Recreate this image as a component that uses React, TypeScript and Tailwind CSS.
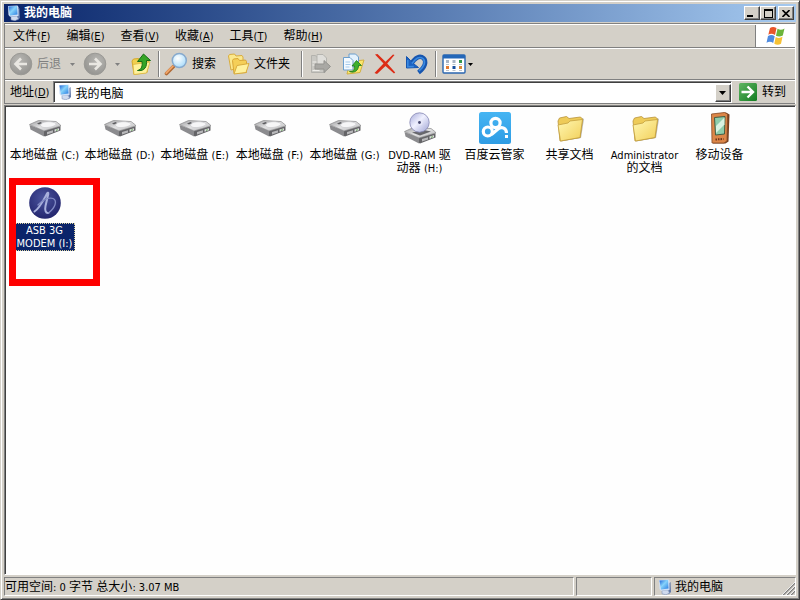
import React from "react";

const LATIN = /([\x21-\x7e][\x20-\x7e]*)/;

/* Chinese glyphs are set at 12px, Latin runs at 11px. */
function Mixed({ text }: { text: string }) {
  return (
    <>
      {text.split(LATIN).map((part, i) =>
        i % 2 ? (
          <span key={i} className="text-[11px]">
            {part}
          </span>
        ) : (
          part
        ),
      )}
    </>
  );
}

function ComputerIcon({ className }: { className: string }) {
  return (
    <svg viewBox="0 0 16 16" className={className} aria-hidden="true">
      <defs>
        <linearGradient id="screen" x1="0" y1="0" x2="1" y2="1">
          <stop offset="0" stopColor="#1f62d6" />
          <stop offset="0.45" stopColor="#86d3fb" />
          <stop offset="1" stopColor="#2a7be0" />
        </linearGradient>
      </defs>
      <path d="M11 5l2.500-2 .5 10-2.500 2.500z" fill="#5d76a8" />
      <path d="M5 11.500l6-.5 1.500 3-3.500 1.800-4-1z" fill="#cfdaee" stroke="#7f93ba" strokeWidth=".6" />
      <path d="M2 1l9.500-.5L12.500 2v9l-8.500.800L2.500 10z" fill="#cfe0f7" />
      <path d="M2.500 1.500L11 1l.500 8.500L4 10.500z" fill="url(#screen)" />
    </svg>
  );
}

function ArrowDisc({ flip }: { flip?: boolean }) {
  return (
    <svg viewBox="0 0 24 24" className={flip ? "size-6 -scale-x-100" : "size-6"} aria-hidden="true">
      <defs>
        <radialGradient id="disc" cx=".4" cy=".35" r=".8">
          <stop offset="0" stopColor="#b9b8b4" />
          <stop offset="1" stopColor="#8e8d8a" />
        </radialGradient>
      </defs>
      <circle cx="12" cy="12" r="10.800" fill="url(#disc)" stroke="#9a9995" />
      <path d="M12 6.500L6.500 12l5.500 5.500M6.500 12H18" fill="none" stroke="#e9e7e2" strokeWidth="2.600" />
    </svg>
  );
}

function UpIcon() {
  return (
    <svg viewBox="0 0 22 24" className="h-6 w-[22px]" aria-hidden="true">
      <path d="M2 9l1.500-2 5-.5 2 1.500 7-1.500 1.500 2-2 12-13 2z" fill="#f0cf4e" stroke="#d5a92b" />
      <path d="M3 12.500l13-2 4-.5-3.500 11L4 22.500z" fill="#fff29c" stroke="#dcb743" strokeWidth=".8" />
      <path d="M7.500 18.500c4.500-1 5-5 4.500-9H7.500L13.500 2l7 6.500h-4c.5 6-1.500 11-9 10z" fill="#35a526" stroke="#176d16" />
    </svg>
  );
}

function SearchIcon() {
  return (
    <svg viewBox="0 0 24 24" className="size-6" aria-hidden="true">
      <defs>
        <radialGradient id="lens" cx=".4" cy=".35" r=".7">
          <stop offset="0" stopColor="#ffffff" />
          <stop offset="1" stopColor="#a5dafa" />
        </radialGradient>
      </defs>
      <path d="M9.500 14.500L2.500 21.500" stroke="#b06a35" strokeWidth="3.600" strokeLinecap="round" />
      <path d="M9 14.200L2.200 21" stroke="#f0a468" strokeWidth="1.800" strokeLinecap="round" />
      <circle cx="15.300" cy="8.500" r="7" fill="url(#lens)" stroke="#86a9cd" strokeWidth="1.500" />
    </svg>
  );
}

function FoldersIcon() {
  return (
    <svg viewBox="0 0 24 24" className="size-6" aria-hidden="true">
      <path d="M1.500 4l1-1.500 5-.5 1.500 2 6-.5 1 1.500v10L4 18z" fill="#fbe88d" stroke="#d9ac3e" />
      <path d="M5.500 8.500l1-1.500 4.500-.5 1.500 2 6-.5 1 1.500v11L7 21.500z" fill="#f5cf57" stroke="#d9a636" />
      <path d="M10 13.500l12-2-3 9L7 22z" fill="#fff19c" stroke="#d9ac3e" />
    </svg>
  );
}

function MoveIcon() {
  return (
    <svg viewBox="0 0 24 24" className="size-6" aria-hidden="true">
      <path d="M2.500 20.500v-17h4l1.500 2h8v15z" fill="#c9c8c3" stroke="#b3b2ad" />
      <path d="M8 2.500h6l3.500 3.500v11H8z" fill="#dfdeda" stroke="#b5b4af" />
      <path d="M6 12h9V8.500l6.500 6-6.500 6v-3.500H6z" fill="#a9a8a4" stroke="#94938f" />
      <path d="M3.500 10h4M3.500 13h2M3.500 18.500h7" stroke="#efeeea" />
    </svg>
  );
}

function CopyIcon() {
  return (
    <svg viewBox="0 0 24 24" className="size-6" aria-hidden="true">
      <path d="M9 9.500l14-1.500-4 12.500-13 1.500z" fill="#fbe76c" stroke="#d3b040" />
      <path d="M8 2h6.500L17.500 5v10H8z" fill="#e3f1fd" stroke="#6c9fce" />
      <path d="M2.500 5.500H9l3 3V18H2.500z" fill="#f4faff" stroke="#6c9fce" />
      <path d="M4.500 10H9M4.500 12.500h5M4.500 15h4" stroke="#a6cbec" />
      <path d="M8.500 19.500c4 .5 5.500-2 5-5.500H11l4.500-5.500 5 5H17.500c0 5-4 8-9 6z" fill="#3fb02d" stroke="#1e7a1c" strokeWidth=".8" />
    </svg>
  );
}

function DeleteIcon() {
  return (
    <svg viewBox="0 0 24 24" className="size-6" aria-hidden="true">
      <path d="M2 2.500l2.500-.5 8 7.800L20 2.500l1.500.5-7.300 8.500 8 9-1.200 1-8.500-7.500-8.500 8-2.500-1 9-9.500z" fill="#dc2c16" />
    </svg>
  );
}

function UndoIcon() {
  return (
    <svg viewBox="0 0 24 24" className="size-6" aria-hidden="true">
      <path d="M6.500 11.500C10 5.500 15 3 18.500 6.200c3.500 3.300 1.500 9.300-5 14.300" fill="none" stroke="#1755ae" strokeWidth="4.400" />
      <path d="M1.500 4.500V16l12-.5-4.500-3.500-3.500-3.500z" fill="#1c62c2" stroke="#1755ae" />
      <path d="M7 11.500C10.500 5.800 14.800 4 18 6.700c3 2.800 1.500 7.800-4 12.300M2.800 8v6.700l6-.2" fill="none" stroke="#3a8ae0" strokeWidth="1.600" />
    </svg>
  );
}

function ViewsIcon() {
  return (
    <svg viewBox="0 0 24 20" className="h-5 w-6" aria-hidden="true">
      <rect x="1" y="1" width="22" height="18" rx="1" fill="#fff" stroke="#2a66b0" strokeWidth="1.400" />
      <path d="M1 1h22v3.500H1z" fill="#2467b8" />
      <path d="M4 6h3v3H4zM10.500 6h3v3h-3z" fill="#a9b5c6" />
      <path d="M17 6h3v3h-3z" fill="#33964d" />
      <path d="M4 12h3v3H4z" fill="#e47a31" />
      <path d="M10.500 12h3v3h-3z" fill="#174e9d" />
      <path d="M17 12h3v3h-3z" fill="#d98a3b" />
      <path d="M4 10.500h3M10.500 10.500h3M17 10.500h3M4 16.500h3M10.500 16.500h3M17 16.500h3" stroke="#b9c2cc" />
    </svg>
  );
}

function Caret({ className = "w-[7px] h-1" }: { className?: string }) {
  return (
    <svg viewBox="0 0 7 4" preserveAspectRatio="none" className={className} aria-hidden="true">
      <path d="M0 0h7L3.500 4z" fill="currentColor" />
    </svg>
  );
}

function FlagIcon() {
  return (
    <svg viewBox="0 0 20 20" className="size-5" aria-hidden="true">
      <path d="M4 2c2-1.500 4-1.500 6.500 0L9 9C6.500 7.500 4.500 7.500 2.300 8.700z" fill="#e9562b" />
      <path d="M11.500 2.800c2.500 1.300 4.500 1.300 7-.3l-1.700 7c-2.500 1.300-4.500 1.300-6.800.200z" fill="#6cb43a" />
      <path d="M2 10c2.500-1.300 4.500-1.300 6.700.2L7.200 17C5 15.500 3 15.500.500 16.700z" fill="#4f8be0" />
      <path d="M9.700 11c2.300 1.200 4.500 1.200 6.800-.200L15 17.700c-2.500 1.500-4.500 1.200-6.700 0z" fill="#f6c136" />
    </svg>
  );
}

function GoIcon() {
  return (
    <svg viewBox="0 0 20 20" className="size-5" aria-hidden="true">
      <defs>
        <linearGradient id="go" x1="0" y1="0" x2="1" y2="1">
          <stop offset="0" stopColor="#61b563" />
          <stop offset="1" stopColor="#137d22" />
        </linearGradient>
      </defs>
      <rect x="1" y="1" width="18" height="18" rx="1.500" fill="url(#go)" />
      <path d="M3.500 10h11M9.500 4.500L15 10l-5.500 5.500" fill="none" stroke="#fff" strokeWidth="2.400" />
    </svg>
  );
}

function DriveBody() {
  return (
    <>
      <defs>
        <linearGradient id="drive-top" x1="0" y1="0" x2="1" y2="1">
          <stop offset="0" stopColor="#a2a2a4" />
          <stop offset="0.5" stopColor="#e2e2e3" />
          <stop offset="1" stopColor="#b4b4b6" />
        </linearGradient>
      </defs>
      <path d="M.500 13L15 18.500v6L1.500 17.500z" fill="#8b8b8e" />
      <path d="M15 18.500L31.500 14v4.500L16 24.500l-1-.5z" fill="#646467" />
      <path d="M.500 12.500L9.500 8.500l17.500 1 4.500 3.500v1L15 19z" fill="url(#drive-top)" stroke="#89898b" strokeWidth=".7" />
      <path d="M18 20l6-1.800v2.300l-6 2z" fill="#b9b9bb" />
      <path d="M25.500 17.500l4.500-1.300v2l-4.500 1.600z" fill="#dededf" />
      <path d="M27 17.800l1.800-.5v1l-1.800.5z" fill="#5aa04b" />
    </>
  );
}

function DriveIcon() {
  return (
    <svg viewBox="0 0 32 32" className="size-8" aria-hidden="true">
      <DriveBody />
      <path d="M12 12c3-3 11-3 15-.5 1 2-6 4.500-12 4-3-.5-4-2-3-3.500z" fill="#f6f6f7" stroke="#c5c5c7" strokeWidth=".6" />
      <path d="M8 11.500l3.500-1.500 1.500 1-3 1.500z" fill="#5d5d60" />
    </svg>
  );
}

function DvdIcon() {
  return (
    <svg viewBox="0 0 32 32" className="size-8" aria-hidden="true">
      <defs>
        <linearGradient id="dvd" x1="0" y1="0" x2="1" y2="1">
          <stop offset="0" stopColor="#a4a8d8" />
          <stop offset="0.45" stopColor="#f0f1ff" />
          <stop offset="1" stopColor="#9da2d2" />
        </linearGradient>
      </defs>
      <g transform="translate(0 7)">
        <DriveBody />
      </g>
      <path d="M8 20.500l12-2.500 7 1.500-11 4z" fill="#67676c" />
      <circle cx="15.500" cy="10.500" r="9.700" fill="url(#dvd)" stroke="#8587b4" strokeWidth=".8" />
      <circle cx="15.500" cy="10.500" r="3" fill="#e6e7f8" />
      <circle cx="15.500" cy="10.500" r="1.400" fill="#45476e" />
    </svg>
  );
}

function CloudIcon() {
  return (
    <svg viewBox="0 0 32 32" className="size-8" aria-hidden="true">
      <defs>
        <linearGradient id="cloud" x1="0" y1="0" x2="0" y2="1">
          <stop offset="0" stopColor="#46b5f3" />
          <stop offset="1" stopColor="#2e9ce4" />
        </linearGradient>
      </defs>
      <rect width="32" height="32" rx="2.500" fill="url(#cloud)" />
      <g fill="none" stroke="#fff" strokeWidth="3.200">
        <circle cx="16.500" cy="11" r="4.600" />
        <circle cx="8.800" cy="19.500" r="4.500" />
        <path d="M12.500 22.500L19 17c4-3 8.500-.5 8.500 4" />
      </g>
      <rect x="26" y="23" width="3" height="3" fill="#fff" />
    </svg>
  );
}

function FolderIcon() {
  return (
    <svg viewBox="0 0 32 32" className="size-8" aria-hidden="true">
      <defs>
        <linearGradient id="folder" x1="0" y1="0" x2="1" y2="1">
          <stop offset="0" stopColor="#fff8b4" />
          <stop offset="1" stopColor="#f2cf58" />
        </linearGradient>
      </defs>
      <path d="M7 29.500L27 26l3-19-2-1z" fill="#8f8c86" opacity=".6" />
      <path d="M4 9l1.500-3 7-1.500L15 6.500 26.500 5l2 2L26 25.500 6 29z" fill="#eecb58" stroke="#b9933a" strokeWidth=".8" />
      <path d="M4 13l10-2 2-2L28.500 7.500 26 25.500 6.500 29z" fill="url(#folder)" stroke="#c49f3e" strokeWidth=".8" />
    </svg>
  );
}

function PdaIcon() {
  return (
    <svg viewBox="0 0 32 32" className="size-8" aria-hidden="true">
      <path d="M8 2.500L22 .5l3.500 2-1 27-3 2H9z" fill="#77401f" />
      <path d="M7.500 2l13-1.500 3 1.500-.5 27-3 2H8z" fill="#dc8648" stroke="#864a24" strokeWidth=".8" />
      <path d="M10.500 5.500l10.500-1L20.500 22l-9 1z" fill="#8fcdab" stroke="#415d44" />
      <path d="M12 14l8.500-8.500v7L12 21z" fill="#d9f3e2" />
      <path d="M11.500 27.500l8-.5" stroke="#6f351a" strokeWidth="2" strokeDasharray="1.500 1" />
    </svg>
  );
}

function ModemIcon() {
  return (
    <svg viewBox="0 0 32 32" className="size-8" aria-hidden="true">
      <defs>
        <radialGradient id="modem" cx=".45" cy=".35" r=".7">
          <stop offset="0" stopColor="#4b549e" />
          <stop offset="1" stopColor="#20226a" />
        </radialGradient>
      </defs>
      <circle cx="16" cy="16" r="15.800" fill="url(#modem)" />
      <path
        d="M5.500 24.500C11 21 15 12 18 6.500c.8-1.300 1.500-1 1.300.5L16.500 19c-.8 4 0 7.500 3 7"
        fill="none"
        stroke="#a9b1dd"
        strokeWidth="2"
        strokeLinecap="round"
      />
      <path
        d="M9 18c3-4 10-8 15-6.500 4.500 2 2.500 9-4.500 14.500"
        fill="none"
        stroke="#8089c4"
        strokeWidth="1.300"
        strokeLinecap="round"
      />
    </svg>
  );
}

const menus = [
  ["文件", "F"],
  ["编辑", "E"],
  ["查看", "V"],
  ["收藏", "A"],
  ["工具", "T"],
  ["帮助", "H"],
];

const items: { lines: string[]; icon: () => React.ReactElement; selected?: boolean }[] = [
  { lines: ["本地磁盘 (C:)"], icon: DriveIcon },
  { lines: ["本地磁盘 (D:)"], icon: DriveIcon },
  { lines: ["本地磁盘 (E:)"], icon: DriveIcon },
  { lines: ["本地磁盘 (F:)"], icon: DriveIcon },
  { lines: ["本地磁盘 (G:)"], icon: DriveIcon },
  { lines: ["DVD-RAM 驱", "动器 (H:)"], icon: DvdIcon },
  { lines: ["百度云管家"], icon: CloudIcon },
  { lines: ["共享文档"], icon: FolderIcon },
  { lines: ["Administrator", "的文档"], icon: FolderIcon },
  { lines: ["移动设备"], icon: PdaIcon },
  { lines: ["ASB 3G", "MODEM (I:)"], icon: ModemIcon, selected: true },
];

const raised =
  "border border-t-white border-l-white border-r-[#404040] border-b-[#404040] bg-[#d4d0c8] shadow-[inset_-1px_-1px_0_#808080]";

function Separator() {
  return <div className="h-[26px] w-[2px] shrink-0 border-l border-r border-l-[#808080] border-r-white" />;
}

function Band({ className, children }: { className: string; children: React.ReactNode }) {
  return (
    <div className={`flex shrink-0 items-center border-t border-b border-t-white border-b-[#808080] ${className}`}>
      {children}
    </div>
  );
}

export default function App() {
  return (
    <div className="flex h-screen flex-col border border-t-[#d4d0c8] border-l-[#d4d0c8] border-r-[#404040] border-b-[#404040] bg-[#d4d0c8] p-[3px] font-['DejaVu_Sans_Condensed','Noto_Sans_CJK_SC',sans-serif] text-[12px] leading-[13px] text-black shadow-[inset_1px_1px_0_#fff,inset_-1px_-1px_0_#808080]">
      <header className="flex h-[18px] shrink-0 items-center bg-linear-to-r from-[#0a246a] to-[#a6caf0] pr-[2px] pl-[2px]">
        <ComputerIcon className="mr-[2px] size-4" />
        <h1 className="flex-1 pt-px font-bold text-white">我的电脑</h1>
        <button type="button" aria-label="最小化" className={`flex h-[14px] w-4 items-end justify-center pb-[2px] ${raised}`}>
          <span className="mr-1 h-[2px] w-[6px] bg-black" />
        </button>
        <button type="button" aria-label="最大化" className={`flex h-[14px] w-4 items-center justify-center ${raised}`}>
          <span className="h-[9px] w-[9px] border border-t-2 border-black" />
        </button>
        <button type="button" aria-label="关闭" className={`ml-[2px] flex h-[14px] w-4 items-center justify-center ${raised}`}>
          <svg viewBox="0 0 8 7" className="h-[7px] w-2" aria-hidden="true">
            <path d="M.500 0l7 7M7.500 0l-7 7" stroke="#000" strokeWidth="1.600" />
          </svg>
        </button>
      </header>

      <div className="mt-px shrink-0 border-t border-r border-l border-t-[#808080] border-r-white border-l-[#808080]">
        <Band className="h-6">
          <nav className="flex flex-1">
            {menus.map(([name, key]) => (
              <button key={key} type="button" className="px-2">
                {name}
                <span className="text-[11px]">
                  (<u>{key}</u>)
                </span>
              </button>
            ))}
          </nav>
          <div className="flex h-full w-10 items-center justify-center border-l border-[#808080] bg-white">
            <FlagIcon />
          </div>
        </Band>

        <Band className="h-8 pl-1">
          <button type="button" className="flex items-center text-[#808080]">
            <ArrowDisc />
            <span className="ml-1">后退</span>
            <Caret className="ml-[9px] h-[3px] w-[5px]" />
          </button>
          <button type="button" aria-label="前进" className="ml-2 flex items-center text-[#808080]">
            <ArrowDisc flip />
            <Caret className="ml-2 h-[3px] w-[5px]" />
          </button>
          <button type="button" aria-label="向上" className="mr-[6px] ml-[10px]">
            <UpIcon />
          </button>
          <Separator />
          <button type="button" className="ml-1 flex items-center gap-1">
            <SearchIcon />
            搜索
          </button>
          <button type="button" className="mr-[11px] ml-[11px] flex items-center gap-[3px]">
            <FoldersIcon />
            文件夹
          </button>
          <Separator />
          <div className="mr-[6px] ml-[6px] flex gap-2">
            <button type="button" aria-label="移至">
              <MoveIcon />
            </button>
            <button type="button" aria-label="复制到">
              <CopyIcon />
            </button>
            <button type="button" aria-label="删除">
              <DeleteIcon />
            </button>
            <button type="button" aria-label="撤销">
              <UndoIcon />
            </button>
          </div>
          <Separator />
          <button type="button" aria-label="查看方式" className="ml-[5px] flex items-center gap-[2px]">
            <ViewsIcon />
            <Caret className="h-[3px] w-[5px]" />
          </button>
        </Band>

        <Band className="h-6 pl-[5px]">
          <label htmlFor="address">
            地址
            <span className="text-[11px]">
              (<u>D</u>)
            </span>
          </label>
          <div className="ml-1 flex h-[22px] flex-1 items-center border border-t-[#808080] border-r-white border-b-white border-l-[#808080] bg-white pl-[3px] shadow-[inset_1px_1px_0_#404040]">
            <ComputerIcon className="size-4" />
            <input
              id="address"
              type="text"
              defaultValue="我的电脑"
              className="ml-[2px] h-4 min-w-0 flex-1 bg-transparent outline-none"
            />
            <button type="button" aria-label="展开" className={`mt-px flex h-[18px] w-4 items-center justify-center ${raised}`}>
              <Caret />
            </button>
          </div>
          <button type="button" className="mr-[9px] ml-[6px] flex items-center gap-1">
            <GoIcon />
            转到
          </button>
        </Band>
      </div>

      <main className="mt-px flex min-h-0 flex-1 flex-wrap content-start border border-t-[#808080] border-r-white border-b-white border-l-[#808080] bg-[#fefefe] pt-[6px] pl-[2px] shadow-[inset_1px_1px_0_#404040]">
        {items.map(({ lines, icon: Icon, selected }) => (
          <button
            key={lines.join("")}
            type="button"
            className="relative flex h-[75px] w-[75px] flex-col items-center gap-1 whitespace-nowrap"
          >
            <Icon />
            <span
              className={
                selected ? "border border-dotted border-[#d8cf9c] bg-[#0a246a] px-[2px] text-white" : "pt-px"
              }
            >
              {lines.map((line) => (
                <span key={line} className="block">
                  <Mixed text={line} />
                </span>
              ))}
            </span>
            {selected && <span className="absolute -top-[9px] left-[2px] h-[108px] w-[91px] border-[7px] border-[#fe0000]" />}
          </button>
        ))}
      </main>

      <footer className="mt-[2px] flex h-[19px] shrink-0 gap-[2px] *:flex *:items-center *:border *:border-t-[#808080] *:border-r-white *:border-b-white *:border-l-[#808080]">
        <div className="flex-1 pt-px whitespace-pre">
          <span>
            <Mixed text="可用空间: 0 字节 总大小: 3.07 MB" />
          </span>
        </div>
        <div className="w-[76px]" />
        <div className="w-[142px] pl-[2px]">
          <ComputerIcon className="mr-[2px] size-4" />
          <span className="flex-1 pt-px">我的电脑</span>
          <svg viewBox="0 0 13 13" className="size-[13px] self-end" aria-hidden="true">
            <path d="M1 13L13 1M5 13l8-8M9 13l4-4" stroke="#808080" strokeWidth="1.500" />
            <path d="M0 13L13 0M4 13l9-9M8 13l5-5" stroke="#fff" strokeWidth=".8" />
          </svg>
        </div>
      </footer>
    </div>
  );
}
